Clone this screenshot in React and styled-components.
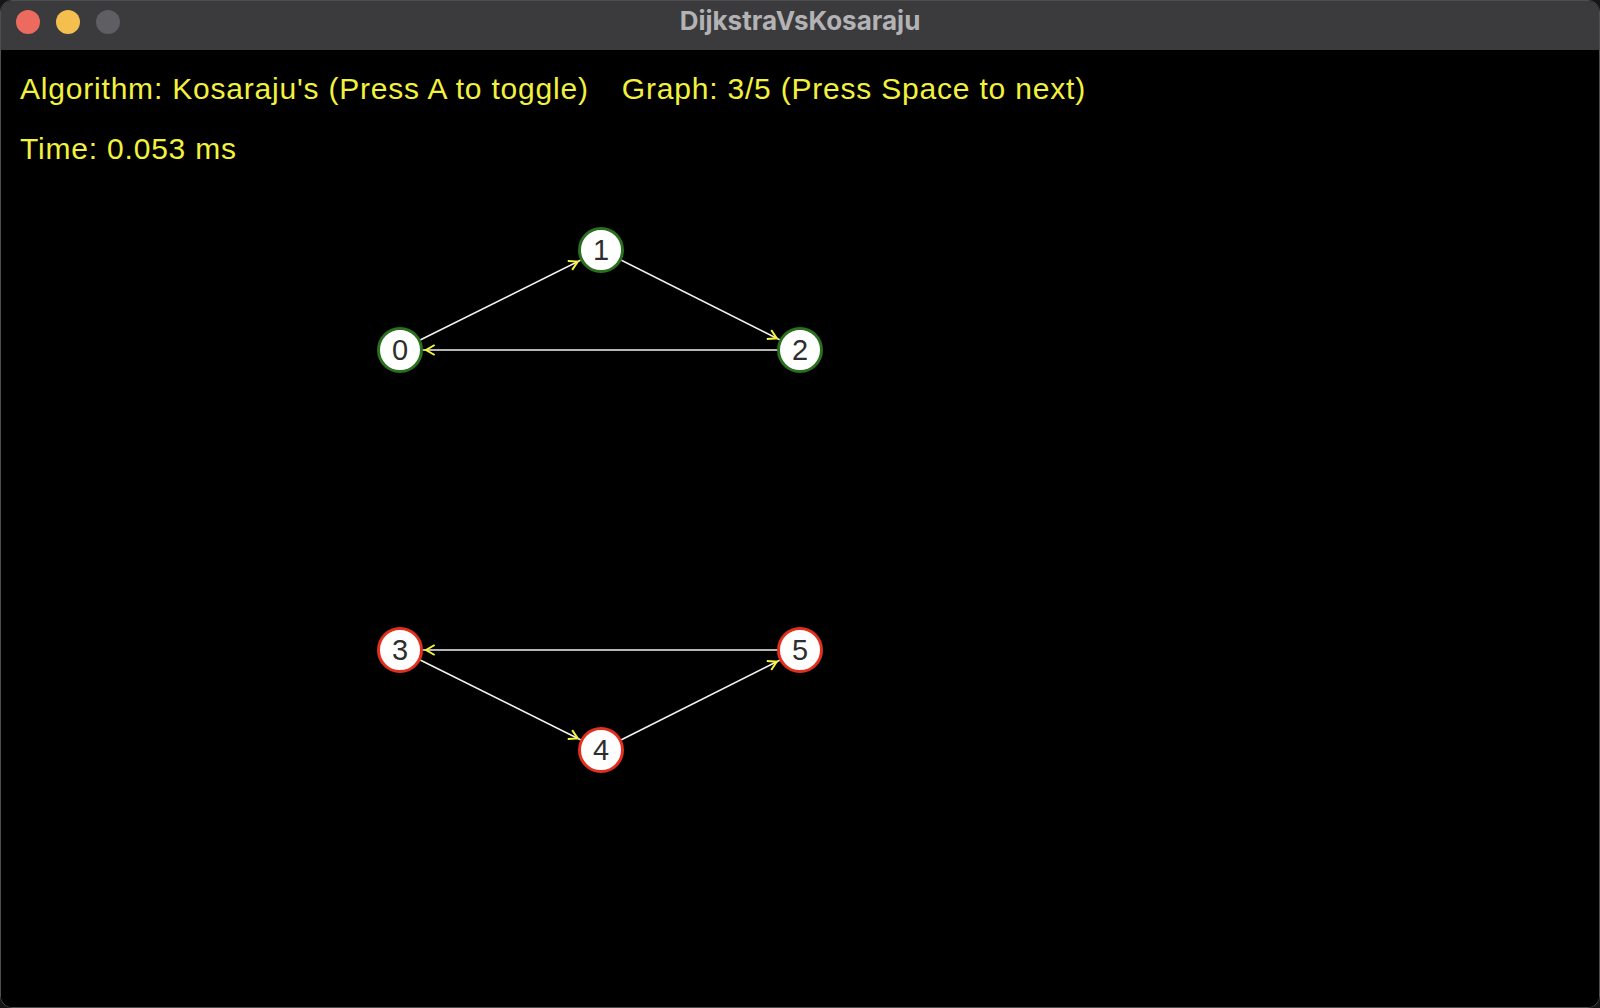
import React from 'react';
import styled, { createGlobalStyle } from 'styled-components';

const GlobalStyle = createGlobalStyle`
  html, body {
    margin: 0;
    padding: 0;
    background: #161616;
  }
  #root {
    width: 1600px;
    height: 1008px;
  }
`;

const Window = styled.div`
  width: 1600px;
  height: 1008px;
  box-sizing: border-box;
  display: flex;
  flex-direction: column;
  border: 1px solid #4e4e50;
  border-radius: 12px;
  overflow: hidden;
  background: #000;
`;

const TitleBar = styled.div`
  height: 49px;
  flex-shrink: 0;
  display: grid;
  grid-template-columns: 1fr auto 1fr;
  background: #3b3b3d;
`;

const Lights = styled.div`
  display: flex;
  gap: 16px;
  padding: 9px 0 0 15px;
`;

const Light = styled.span`
  width: 24px;
  height: 24px;
  border-radius: 50%;
  background: ${(p) => p.color};
`;

const Title = styled.div`
  padding-top: 7px;
  font-family: Inter, "Noto Sans", sans-serif;
  font-weight: 700;
  font-size: 26px;
  line-height: 25px;
  color: #b3b3b5;
`;

const Canvas = styled.div`
  position: relative;
  flex: 1;
  background: #000;
  padding: 9px 0 0 19px;
`;

const Hud = styled.div`
  display: flex;
  flex-direction: column;
  font-family: "Liberation Sans", Arial, sans-serif;
  font-size: 30px;
  line-height: 60px;
  letter-spacing: 0.8px;
  color: #f2f23c;
`;

const HudRow = styled.div`
  display: flex;
  gap: 33px;
  white-space: nowrap;
`;

const GraphLayer = styled.svg`
  position: absolute;
  inset: 0;
  width: 100%;
  height: 100%;
`;

const Node = styled.div`
  position: absolute;
  width: 46px;
  height: 46px;
  box-sizing: border-box;
  transform: translate(-50%, -50%);
  border-radius: 50%;
  border: 3px solid ${(p) => p.ring};
  background: #fff;
  display: flex;
  align-items: center;
  justify-content: center;
  font-family: "Liberation Sans", Arial, sans-serif;
  font-size: 29px;
  line-height: 1;
  color: #2e2e2e;
`;

const GREEN = '#2a701e';
const RED = '#e2301f';

const nodes = [
  { id: 0, x: 399, y: 300, ring: GREEN },
  { id: 1, x: 600, y: 200, ring: GREEN },
  { id: 2, x: 799, y: 300, ring: GREEN },
  { id: 3, x: 399, y: 600, ring: RED },
  { id: 4, x: 600, y: 700, ring: RED },
  { id: 5, x: 799, y: 600, ring: RED },
];

const edges = [
  [0, 1],
  [1, 2],
  [2, 0],
  [3, 4],
  [4, 5],
  [5, 3],
];

function arrowPoints(a, b) {
  const dx = b.x - a.x;
  const dy = b.y - a.y;
  const len = Math.hypot(dx, dy);
  const ux = dx / len;
  const uy = dy / len;
  const tx = b.x - ux * 26;
  const ty = b.y - uy * 26;
  const back = Math.atan2(-uy, -ux);
  const arm = (ang) => [tx + Math.cos(ang) * 10, ty + Math.sin(ang) * 10];
  const p1 = arm(back + Math.PI / 6);
  const p2 = arm(back - Math.PI / 6);
  return `${p1[0]},${p1[1]} ${tx},${ty} ${p2[0]},${p2[1]}`;
}

export default function App() {
  return (
    <>
      <GlobalStyle />
      <Window>
        <TitleBar>
          <Lights>
            <Light color="#ec6a5e" />
            <Light color="#f4bf4f" />
            <Light color="#5f5e62" />
          </Lights>
          <Title>DijkstraVsKosaraju</Title>
          <div />
        </TitleBar>
        <Canvas>
          <GraphLayer>
            {edges.map(([s, t]) => (
              <line
                key={`l${s}-${t}`}
                x1={nodes[s].x}
                y1={nodes[s].y}
                x2={nodes[t].x}
                y2={nodes[t].y}
                stroke="#f2f2f2"
                strokeWidth="1.6"
              />
            ))}
            {edges.map(([s, t]) => (
              <polyline
                key={`a${s}-${t}`}
                points={arrowPoints(nodes[s], nodes[t])}
                fill="none"
                stroke="#f5f53a"
                strokeWidth="2"
              />
            ))}
          </GraphLayer>
          {nodes.map((n) => (
            <Node key={n.id} ring={n.ring} style={{ left: n.x, top: n.y }}>
              {n.id}
            </Node>
          ))}
          <Hud>
            <HudRow>
              <span>Algorithm: Kosaraju's (Press A to toggle)</span>
              <span>Graph: 3/5 (Press Space to next)</span>
            </HudRow>
            <HudRow>
              <span>Time: 0.053 ms</span>
            </HudRow>
          </Hud>
        </Canvas>
      </Window>
    </>
  );
}
